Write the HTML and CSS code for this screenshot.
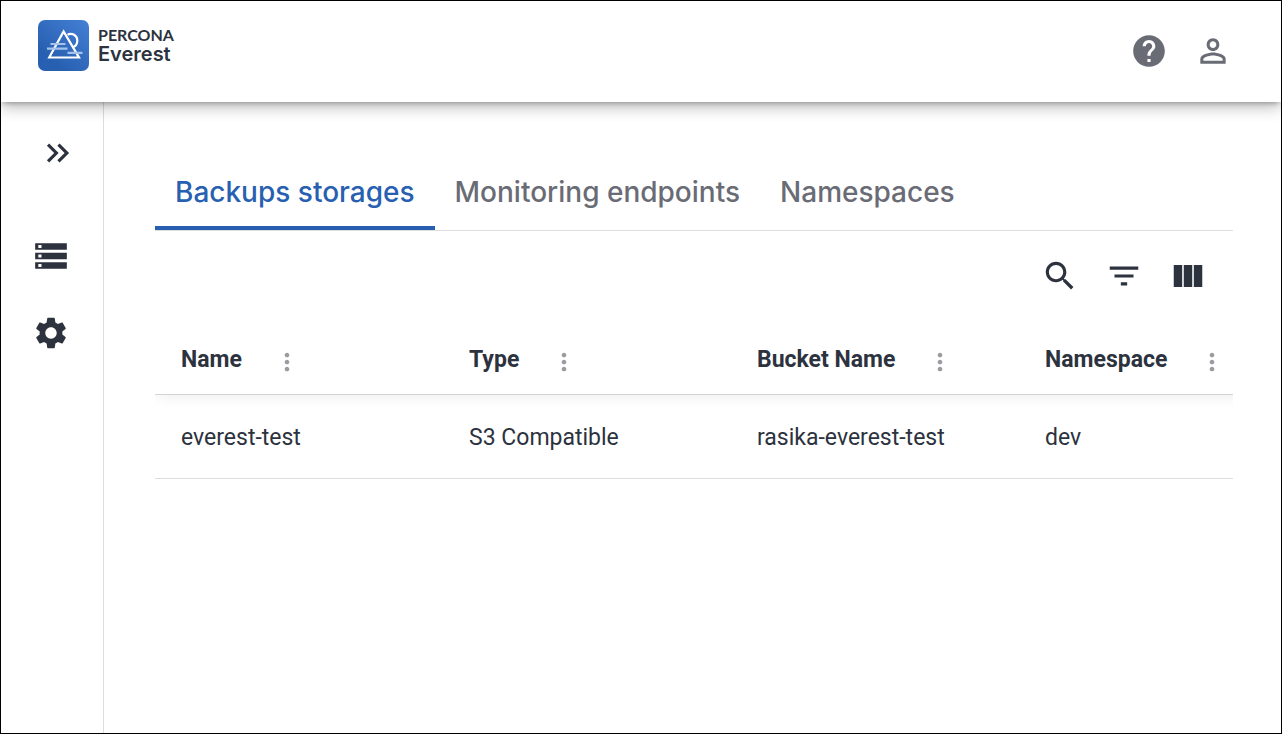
FILE: index.html
```html
<!DOCTYPE html>
<html lang="en">
<head>
<meta charset="utf-8">
<meta name="viewport" content="width=device-width, initial-scale=1">
<title>Percona Everest</title>
<link rel="stylesheet" href="styles.css">
</head>
<body>
<div class="app">
  <header class="topbar">
    <a class="brand" href="#">
      <svg class="brand-mark" viewBox="0 0 51 51" aria-hidden="true">
        <defs>
          <linearGradient id="mark" x1="1" y1="0" x2="0.3" y2="0.8">
            <stop offset="0" stop-color="#4580d6"/>
            <stop offset="1" stop-color="#2860b1"/>
          </linearGradient>
        </defs>
        <rect width="51" height="51" rx="7" fill="url(#mark)"/>
        <g fill="none" stroke="#fff" stroke-width="2.2">
          <path d="M11.200 37.500 25.600 11.500 41 37.500z"/>
          <path d="M29.500 14.800c4.400-2.400 9.800.4 9.800 6 0 3-1.800 5.600-4.800 6.600"/>
        </g>
        <g stroke="#a5c2ec" stroke-width="2.200">
          <path d="M12.500 24H27.500M9 28.600H29.500M29.500 32.800H44.500"/>
        </g>
      </svg>
      <span class="brand-text">
        <span class="brand-company">PERCONA</span>
        <span class="brand-product">Everest</span>
      </span>
    </a>
    <div class="topbar-actions">
      <button class="icon-button" type="button" aria-label="Help"><svg class="icon" viewBox="0 0 24 24"><path d="M12 2C6.480 2 2 6.480 2 12s4.480 10 10 10 10-4.480 10-10S17.520 2 12 2zm1 17h-2v-2h2v2zm2.070-7.750l-.9.920C13.450 12.900 13 13.500 13 15h-2v-.5c0-1.100.45-2.100 1.170-2.830l1.240-1.260c.37-.36.59-.86.59-1.410 0-1.100-.9-2-2-2s-2 .9-2 2H8c0-2.210 1.790-4 4-4s4 1.790 4 4c0 .88-.36 1.680-.93 2.250z"/></svg></button>
      <button class="icon-button" type="button" aria-label="Account"><svg class="icon" viewBox="0 0 24 24"><path d="M12 5.900c1.160 0 2.100.94 2.100 2.100s-.94 2.100-2.100 2.100S9.900 9.160 9.900 8s.94-2.100 2.100-2.100m0 9c2.970 0 6.100 1.460 6.100 2.100v1.100H5.900V17c0-.64 3.130-2.100 6.100-2.100M12 4C9.790 4 8 5.790 8 8s1.790 4 4 4 4-1.790 4-4-1.790-4-4-4zm0 9c-2.670 0-8 1.340-8 4v3h16v-3c0-2.660-5.330-4-8-4z"/></svg></button>
    </div>
  </header>
  <div class="body">
    <nav class="sidebar" aria-label="Main">
      <button class="icon-button sidebar-toggle" type="button" aria-label="Expand menu"><svg class="icon" viewBox="0 0 24 24"><path d="M6.410 6 5 7.410 9.580 12 5 16.590 6.410 18l6-6zM13 6l-1.410 1.410L16.170 12l-4.580 4.590L13 18l6-6z"/></svg></button>
      <a class="sidebar-link" href="#" aria-label="Databases"><svg class="icon" viewBox="0 0 24 24"><path d="M2 20h20v-4H2v4zm2-3h2v2H4v-2zM2 4v4h20V4H2zm4 3H4V5h2v2zm-4 7h20v-4H2v4zm2-3h2v2H4v-2z"/></svg></a>
      <a class="sidebar-link" href="#" aria-label="Settings"><svg class="icon" viewBox="0 0 24 24"><path d="M19.140 12.940c.04-.3.06-.61.06-.94 0-.32-.02-.64-.07-.94l2.030-1.580c.18-.14.23-.41.12-.61l-1.920-3.320c-.12-.22-.37-.29-.59-.22l-2.390.96c-.5-.38-1.030-.7-1.620-.94l-.36-2.540c-.04-.24-.24-.41-.48-.41h-3.840c-.24 0-.43.17-.47.41l-.36 2.540c-.59.24-1.130.57-1.620.94l-2.390-.96c-.22-.08-.47 0-.59.22L2.740 8.870c-.12.21-.08.47.12.61l2.030 1.580c-.05.3-.09.63-.09.94s.02.64.07.94l-2.030 1.580c-.18.14-.23.41-.12.61l1.920 3.320c.12.22.37.29.59.22l2.390-.96c.5.38 1.030.7 1.620.94l.36 2.540c.05.24.24.41.48.41h3.840c.24 0 .44-.17.47-.41l.36-2.540c.59-.24 1.130-.56 1.620-.94l2.390.96c.22.08.47 0 .59-.22l1.920-3.320c.12-.22.07-.47-.12-.61l-2.010-1.580zM12 15.600c-1.980 0-3.600-1.620-3.600-3.600s1.620-3.600 3.600-3.600 3.600 1.620 3.600 3.600-1.620 3.600-3.600 3.600z"/></svg></a>
    </nav>
    <main class="content">
      <div class="tabs" role="tablist">
        <button class="tab tab-active" type="button" role="tab" aria-selected="true">Backups storages</button>
        <button class="tab" type="button" role="tab" aria-selected="false">Monitoring endpoints</button>
        <button class="tab" type="button" role="tab" aria-selected="false">Namespaces</button>
      </div>
      <div class="toolbar">
        <button class="icon-button" type="button" aria-label="Search"><svg class="icon" viewBox="0 0 24 24"><path d="M15.500 14h-.79l-.28-.27C15.410 12.590 16 11.110 16 9.500 16 5.910 13.090 3 9.500 3S3 5.910 3 9.500 5.910 16 9.500 16c1.610 0 3.090-.59 4.230-1.570l.27.28v.79l5 4.990L20.490 19l-4.990-5zm-6 0C7.010 14 5 11.990 5 9.500S7.010 5 9.500 5 14 7.010 14 9.500 11.990 14 9.500 14z"/></svg></button>
        <button class="icon-button" type="button" aria-label="Filter"><svg class="icon" viewBox="0 0 24 24"><path d="M10 18h4v-2h-4v2zM3 6v2h18V6H3zm3 7h12v-2H6v2z"/></svg></button>
        <button class="icon-button" type="button" aria-label="Columns"><svg class="icon" viewBox="0 0 24 24"><path d="M14.670 5v14H9.330V5h5.340zm1 14H21V5h-5.330v14zm-7.340 0V5H3v14h5.330z"/></svg></button>
      </div>
      <div class="table-wrap">
        <table class="table">
          <thead>
            <tr>
              <th scope="col"><div class="head-cell">Name<button class="more" type="button" aria-label="Name column actions"><svg class="more-icon" viewBox="0 0 24 24"><path d="M12 8c1.100 0 2-.9 2-2s-.9-2-2-2-2 .9-2 2 .9 2 2 2zm0 2c-1.100 0-2 .9-2 2s.9 2 2 2 2-.9 2-2-.9-2-2-2zm0 6c-1.100 0-2 .9-2 2s.9 2 2 2 2-.9 2-2-.9-2-2-2z"/></svg></button></div></th>
              <th scope="col"><div class="head-cell">Type<button class="more" type="button" aria-label="Type column actions"><svg class="more-icon" viewBox="0 0 24 24"><path d="M12 8c1.100 0 2-.9 2-2s-.9-2-2-2-2 .9-2 2 .9 2 2 2zm0 2c-1.100 0-2 .9-2 2s.9 2 2 2 2-.9 2-2-.9-2-2-2zm0 6c-1.100 0-2 .9-2 2s.9 2 2 2 2-.9 2-2-.9-2-2-2z"/></svg></button></div></th>
              <th scope="col"><div class="head-cell">Bucket Name<button class="more" type="button" aria-label="Bucket Name column actions"><svg class="more-icon" viewBox="0 0 24 24"><path d="M12 8c1.100 0 2-.9 2-2s-.9-2-2-2-2 .9-2 2 .9 2 2 2zm0 2c-1.100 0-2 .9-2 2s.9 2 2 2 2-.9 2-2-.9-2-2-2zm0 6c-1.100 0-2 .9-2 2s.9 2 2 2 2-.9 2-2-.9-2-2-2z"/></svg></button></div></th>
              <th scope="col"><div class="head-cell">Namespace<button class="more" type="button" aria-label="Namespace column actions"><svg class="more-icon" viewBox="0 0 24 24"><path d="M12 8c1.100 0 2-.9 2-2s-.9-2-2-2-2 .9-2 2 .9 2 2 2zm0 2c-1.100 0-2 .9-2 2s.9 2 2 2 2-.9 2-2-.9-2-2-2zm0 6c-1.100 0-2 .9-2 2s.9 2 2 2 2-.9 2-2-.9-2-2-2z"/></svg></button></div></th>
            </tr>
          </thead>
          <tbody>
            <tr>
              <td>everest-test</td>
              <td>S3 Compatible</td>
              <td>rasika-everest-test</td>
              <td>dev</td>
            </tr>
          </tbody>
        </table>
      </div>
    </main>
  </div>
</div>
</body>
</html>
```
FILE: styles.css
```css
* {
  box-sizing: border-box;
}

body {
  margin: 0;
  background: #fff;
  color: #2c323e;
  font-family: Roboto, "Liberation Sans", sans-serif;
  font-size: 23px;
}

button {
  border: 0;
  padding: 0;
  background: none;
  color: inherit;
  font: inherit;
  cursor: pointer;
}

.app {
  display: flex;
  flex-direction: column;
  min-height: 100vh;
  border: 1px solid #000;
  overflow: hidden;
}

.topbar {
  display: flex;
  justify-content: space-between;
  align-items: flex-start;
  padding: 19px 49px 31px 37px;
  background: #fff;
  box-shadow: 0 3px 5px -2px rgba(0, 0, 0, 0.3), 0 6px 14px rgba(0, 0, 0, 0.24);
  z-index: 1;
}

.brand {
  display: flex;
  gap: 9px;
  color: #2c323e;
  text-decoration: none;
}

.brand-mark {
  width: 51px;
  height: 51px;
}

.brand-text {
  display: flex;
  flex-direction: column;
  padding-top: 7px;
}

.brand-company {
  font-family: Lato, sans-serif;
  font-size: 16px;
  font-weight: 700;
  line-height: 16px;
}

.brand-product {
  font-family: Inter, sans-serif;
  font-size: 20px;
  font-weight: 600;
  line-height: 22px;
}

.topbar-actions {
  display: flex;
  gap: 26px;
  padding-top: 12px;
  color: #6a6c75;
}

.icon-button {
  display: flex;
}

.icon {
  display: block;
  width: 38px;
  height: 38px;
  fill: currentColor;
}

.body {
  display: flex;
  flex: 1;
}

.sidebar {
  display: flex;
  flex-direction: column;
  align-items: center;
  gap: 39px;
  width: 103px;
  padding: 32px 2px 0 0;
  border-right: 1px solid #ddd;
}

.sidebar-toggle {
  margin: 0 0 26px 13px;
}

.sidebar-link {
  color: inherit;
}

.content {
  flex: 1;
  min-width: 0;
  padding: 51px 48px 0 51px;
}

.tabs {
  display: flex;
  border-bottom: 1px solid #ddd;
}

.tab {
  padding: 21px 20px 16px;
  border-bottom: 4px solid transparent;
  color: #6a6c75;
  font-family: Inter, sans-serif;
  font-size: 28px;
  font-weight: 500;
  line-height: 36px;
}

.tab-active {
  border-bottom-color: #2860b1;
  color: #2860b1;
}

.toolbar {
  display: flex;
  justify-content: flex-end;
  gap: 26px;
  padding: 26px 26px 29px;
}

.table-wrap {
  overflow: hidden;
}

.table {
  width: 100%;
  min-width: 1152px;
  border-collapse: collapse;
  table-layout: fixed;
}

.table thead {
  box-shadow: 0 4px 14px -2px rgba(0, 0, 0, 0.08);
  clip-path: inset(0 0 -20px 0);
}

.table th,
.table td {
  padding: 2px 0 0 26px;
  border-bottom: 1px solid #ddd;
  text-align: left;
  white-space: nowrap;
}

.table th {
  height: 70px;
  font-weight: 700;
}

.table td {
  height: 84px;
}

.head-cell {
  display: flex;
  align-items: center;
  gap: 31px;
}

.more {
  display: flex;
  padding-top: 4px;
  color: #9a9ba1;
}

.more-icon {
  width: 28px;
  height: 28px;
  fill: currentColor;
}
```
